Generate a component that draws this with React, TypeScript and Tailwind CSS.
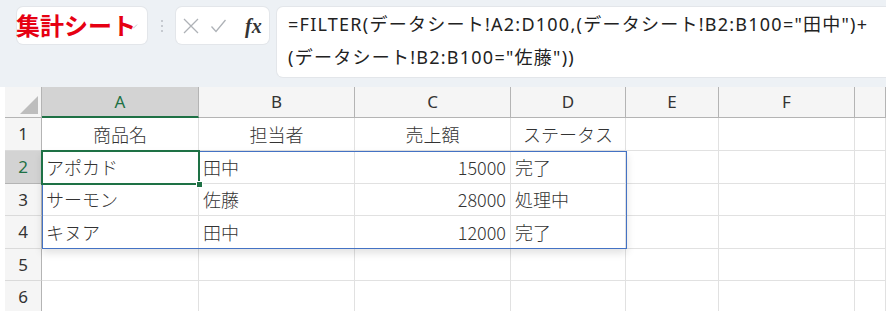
import { ChevronDown } from "lucide-react";

const COLS = ["A", "B", "C", "D", "E", "F", ""];

type Cell = { text: string; align?: "left" | "center" | "right" };

const rows: Cell[][] = [
    [
        { text: "商品名", align: "center" },
        { text: "担当者", align: "center" },
        { text: "売上額", align: "center" },
        { text: "ステータス", align: "center" },
    ],
    [{ text: "アポカド" }, { text: "田中" }, { text: "15000", align: "right" }, { text: "完了" }],
    [{ text: "サーモン" }, { text: "佐藤" }, { text: "28000", align: "right" }, { text: "処理中" }],
    [{ text: "キヌア" }, { text: "田中" }, { text: "12000", align: "right" }, { text: "完了" }],
    [],
    [],
];

const jp = { fontFamily: '"Noto Sans CJK JP", "Noto Sans", sans-serif' };
const ui = { fontFamily: '"Noto Sans", "Noto Sans CJK JP", sans-serif' };

const alignClass = (a?: string) =>
    a === "center" ? "justify-center" : a === "right" ? "justify-end pr-[4px]" : "justify-start pl-[4px]";

const FormulaBar = () => (
    <div className="h-[87px] bg-[#edf1f5] flex items-start pt-[7px] pl-[17px]">
        <div className="relative w-[130px] h-[37px] bg-white rounded-md shadow-[0_0_0_1px_#e3e6ea]">
            <ChevronDown className="absolute right-[7px] top-[13px] text-[#b8bcc2]" size={13} strokeWidth={1.5} />
            <span
                className="absolute left-[-1px] top-[4px] text-[24px] leading-[28px] font-bold text-[#e60012]"
                style={jp}
            >
                集計シート
            </span>
        </div>
        <div className="w-[29px] h-[37px] flex flex-col items-center justify-center gap-[3px]">
            <span className="w-[2px] h-[2px] rounded-full bg-[#b9bdc3]" />
            <span className="w-[2px] h-[2px] rounded-full bg-[#b9bdc3]" />
            <span className="w-[2px] h-[2px] rounded-full bg-[#b9bdc3]" />
        </div>
        <div className="w-[93px] h-[37px] bg-white rounded-md shadow-[0_0_0_1px_#e3e6ea] flex items-center pl-[7px]">
            <svg width="16" height="16" viewBox="0 0 16 16" fill="none" stroke="#aeb2b7" strokeWidth="1.3">
                <path d="M1 1 L15 15 M15 1 L1 15" />
            </svg>
            <svg className="ml-[12px]" width="15" height="14" viewBox="0 0 15 14" fill="none" stroke="#aeb2b7" strokeWidth="1.3">
                <path d="M0.5 7.5 L5 12.5 L14.5 1" />
            </svg>
            <span
                className="ml-[19px] text-[20px] leading-none italic font-bold text-[#333]"
                style={{ fontFamily: '"Liberation Serif", serif' }}
            >
                fx
            </span>
        </div>
        <div
            className="ml-[8px] flex-1 h-[70px] bg-white rounded-l-md shadow-[0_0_0_1px_#e3e6ea] pl-[11px] pt-[1px] text-[18px] tracking-[1.25px] leading-[33px] text-[#222] whitespace-nowrap"
            style={ui}
        >
            <div>=FILTER(データシート!A2:D100,(データシート!B2:B100="田中")+</div>
            <div>(データシート!B2:B100="佐藤"))</div>
        </div>
    </div>
);

const Sheet = () => (
    <div className="bg-white pl-[5px]">
        <div className="relative grid grid-cols-[37px_157px_156px_156px_115px_93px_136px_1fr] grid-rows-[31px_33px_33px_32px_33px_32px_33px]">
            {/* corner */}
            <div className="relative bg-[#f5f5f5] border-r border-b border-[#b4b4b4]">
                <svg className="absolute right-[3px] bottom-[3px]" width="18" height="18" viewBox="0 0 18 18">
                    <path d="M18 0 L18 18 L0 18 Z" fill="#bdbdbd" />
                </svg>
            </div>
            {COLS.map((c, i) => (
                <div
                    key={`col-${i}`}
                    className={
                        i === 0
                            ? "flex items-center justify-center bg-[#d3d3d3] border-r border-[#b4b4b4] border-b-2 border-b-[#1e7145] text-[#1e7145] text-[17px]"
                            : "flex items-center justify-center bg-[#f5f5f5] border-r border-b border-[#b4b4b4] text-[#333] text-[17px]"
                    }
                    style={ui}
                >
                    {c}
                </div>
            ))}
            {rows.map((r, ri) => (
                <>
                    <div
                        key={`rh-${ri}`}
                        className={
                            ri === 1
                                ? "flex items-center justify-center bg-[#d3d3d3] border-r border-b border-[#b4b4b4] text-[#1e7145] text-[17px]"
                                : "flex items-center justify-center bg-[#f5f5f5] border-r border-b border-[#b4b4b4] border-b-[#dadada] text-[#333] text-[17px]"
                        }
                        style={ui}
                    >
                        {ri + 1}
                    </div>
                    {COLS.map((_, ci) => {
                        const cell = r[ci];
                        return (
                            <div
                                key={`c-${ri}-${ci}`}
                                className={`flex items-center border-r border-b border-[#e1e1e1] text-[18px] font-light text-[#333] whitespace-nowrap ${alignClass(cell?.align)}`}
                                style={jp}
                            >
                                {cell?.text}
                            </div>
                        );
                    })}
                </>
            ))}

            {/* spill range */}
            <div className="absolute left-[37px] top-[64px] w-[585px] h-[98px] border border-[#4472c4] shadow-[0_4px_8px_rgba(0,0,0,0.12)] pointer-events-none" />
            {/* active cell */}
            <div className="absolute left-[36px] top-[63px] w-[159px] h-[35px] border-2 border-[#1e7145] pointer-events-none">
                <span className="absolute right-[-5px] bottom-[-5px] w-[7px] h-[7px] bg-[#1e7145] border border-white" />
            </div>
        </div>
    </div>
);

export default function App() {
    return (
        <div className="w-[886px] h-[311px] overflow-hidden bg-white">
            <FormulaBar />
            <Sheet />
        </div>
    );
}
